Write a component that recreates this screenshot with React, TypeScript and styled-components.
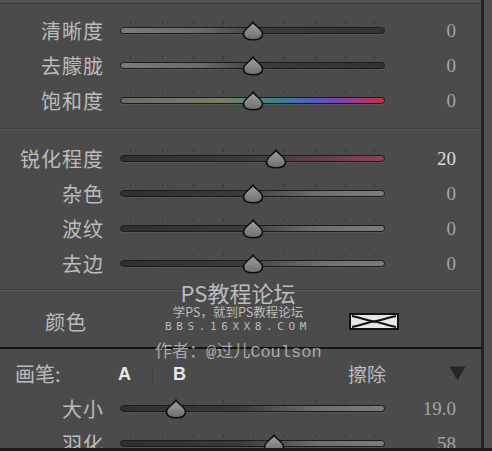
import React from 'react';
import styled, { createGlobalStyle } from 'styled-components';

const GlobalStyle = createGlobalStyle`
  html, body {
    margin: 0;
    padding: 0;
    background: #4b4b4b;
    overflow: hidden;
  }
`;

const CJK = `"Noto Sans CJK SC", "Noto Sans", sans-serif`;

type SliderRow = {
  label: string;
  value: string;
  pos: number;
  track: string;
  bright?: boolean;
};

const plain = 'linear-gradient(90deg, #7a7a7a 0%, #6a6a6a 30%, #3a3a3a 55%, #333 100%)';
const rising = 'linear-gradient(90deg, #2f2f2f 0%, #3a3a3a 45%, #6e6e6e 75%, #7c7c7c 100%)';
const saturation =
  'linear-gradient(90deg, #6c6c66 0%, #7c7d63 38%, #4b8a6a 50%, #3e7b98 62%, #5a54c2 75%, #8a3f9e 86%, #c0323f 100%)';
const sharpen = 'linear-gradient(90deg, #2f2f2f 0%, #3a3a3a 45%, #5b3f45 72%, #8c4251 100%)';

const presence: SliderRow[] = [
  { label: '清晰度', value: '0', pos: 50, track: plain },
  { label: '去朦胧', value: '0', pos: 50, track: plain },
  { label: '饱和度', value: '0', pos: 50, track: saturation },
];

const detail: SliderRow[] = [
  { label: '锐化程度', value: '20', pos: 59, track: sharpen, bright: true },
  { label: '杂色', value: '0', pos: 50, track: rising },
  { label: '波纹', value: '0', pos: 50, track: rising },
  { label: '去边', value: '0', pos: 50, track: rising },
];

const brush: SliderRow[] = [
  { label: '大小', value: '19.0', pos: 21, track: rising },
  { label: '羽化', value: '58', pos: 58, track: rising },
];

const ticks = [10, 42, 73, 103, 133, 163, 195, 225, 254];

const Thumb = () => (
  <svg width="22" height="20" viewBox="0 0 22 20">
    <defs>
      <linearGradient id="thumbFill" x1="0" y1="0" x2="0" y2="1">
        <stop offset="0" stopColor="#a4a4a4" />
        <stop offset="1" stopColor="#6c6c6c" />
      </linearGradient>
    </defs>
    <path
      d="M11 1.2 C13 5 20.5 8 20.5 13 C20.5 16.8 16.5 18.8 11 18.8 C5.5 18.8 1.5 16.8 1.5 13 C1.5 8 9 5 11 1.2 Z"
      fill="url(#thumbFill)"
      stroke="#0e0e0e"
      strokeWidth="1.6"
    />
  </svg>
);

const Slider = ({ row }: { row: SliderRow }) => (
  <Row>
    <Label>{row.label}</Label>
    <TrackBox>
      {ticks.map((t) => (
        <Tick key={t} style={{ left: t }} />
      ))}
      <Track $bg={row.track} />
      <ThumbHolder style={{ left: `${row.pos}%` }}>
        <Thumb />
      </ThumbHolder>
    </TrackBox>
    <Value $bright={row.bright}>{row.value}</Value>
  </Row>
);

const App = () => (
  <>
    <GlobalStyle />
    <Frame>
      <Panel>
        <TopStrip />
        <Section $top={9} $bottom={10}>
          {presence.map((r) => (
            <Slider key={r.label} row={r} />
          ))}
        </Section>
        <Divider />
        <Section $top={11} $bottom={8}>
          {detail.map((r) => (
            <Slider key={r.label} row={r} />
          ))}
        </Section>
        <Divider />
        <ColorRow>
          <ColorLabel>颜色</ColorLabel>
          <Swatch>
            <svg width="46" height="13" viewBox="0 0 46 13">
              <path d="M1 1 C14 4 18 6 23 6.5 C28 7 32 9 45 12" stroke="#111" strokeWidth="2" fill="none" />
              <path d="M1 12 C14 9 18 7 23 6.5 C28 6 32 4 45 1" stroke="#111" strokeWidth="2" fill="none" />
            </svg>
          </Swatch>
        </ColorRow>
        <BlackLine />
        <Section $top={7} $bottom={0}>
          <BrushRow>
            <BrushLabel>画笔:</BrushLabel>
            <BrushKey>A</BrushKey>
            <KeySep />
            <BrushKey>B</BrushKey>
            <Erase>擦除</Erase>
            <svg width="17" height="15" viewBox="0 0 17 15">
              <path d="M0.5 0.5 H16.5 L8.5 14.5 Z" fill="#262626" />
            </svg>
          </BrushRow>
          {brush.map((r) => (
            <Slider key={r.label} row={r} />
          ))}
        </Section>
      </Panel>
      <Edge />
      <Watermark>
        <WmTitle>PS教程论坛</WmTitle>
        <WmSub>学PS，就到PS教程论坛</WmSub>
        <WmSite>BBS.16XX8.COM</WmSite>
        <WmAuthor>作者：@过儿Coulson</WmAuthor>
      </Watermark>
      <BottomLine />
    </Frame>
  </>
);

const Frame = styled.div`
  position: relative;
  display: flex;
  align-items: flex-start;
  width: 492px;
  height: 451px;
  overflow: hidden;
  background: #4b4b4b;
`;

const Panel = styled.div`
  display: block;
  width: 481px;
  flex-shrink: 0;
`;

const Edge = styled.div`
  align-self: stretch;
  width: 11px;
  border-left: 3px solid #242424;
  background: #515151;
`;

const TopStrip = styled.div`
  height: 3px;
  background: #525252;
  border-bottom: 1px solid #3b3b3b;
`;

const Section = styled.div<{ $top: number; $bottom: number }>`
  display: flex;
  flex-direction: column;
  padding: ${(p) => p.$top}px 0 ${(p) => p.$bottom}px;
`;

const Divider = styled.div`
  height: 1px;
  background: #3e3e3e;
  border-bottom: 1px solid #565656;
`;

const BlackLine = styled.div`
  height: 2px;
  background: #141414;
`;

const Row = styled.div`
  display: grid;
  grid-template-columns: 104px 265px 55px;
  column-gap: 16px;
  align-items: center;
  height: 35px;
  flex-shrink: 0;
`;

const Label = styled.div`
  text-align: right;
  font-family: ${CJK};
  font-size: 20px;
  letter-spacing: 1px;
  color: #bcbcbc;
  line-height: 1;
`;

const TrackBox = styled.div`
  position: relative;
  height: 35px;
`;

const Tick = styled.div`
  position: absolute;
  top: 8px;
  width: 1px;
  height: 3px;
  background: #383838;
`;

const Track = styled.div<{ $bg: string }>`
  position: absolute;
  left: 0;
  right: 0;
  top: 14px;
  height: 5px;
  border: 1px solid #1c1c1c;
  border-radius: 4px;
  background: ${(p) => p.$bg};
  box-shadow: 0 1px 0 rgba(255, 255, 255, 0.06);
`;

const ThumbHolder = styled.div`
  position: absolute;
  top: 8px;
  width: 22px;
  height: 20px;
  transform: translateX(-11px);
  line-height: 0;
`;

const Value = styled.div<{ $bright?: boolean }>`
  text-align: right;
  font-family: 'Liberation Serif', serif;
  font-size: 19px;
  color: ${(p) => (p.$bright ? '#dcdcdc' : '#a4a4a4')};
  line-height: 1;
`;

const ColorRow = styled.div`
  display: flex;
  align-items: center;
  height: 35px;
  padding: 13px 0 8px 45px;
`;

const ColorLabel = styled.div`
  width: 304px;
  font-family: ${CJK};
  font-size: 20px;
  letter-spacing: 1px;
  color: #bcbcbc;
  line-height: 1;
`;

const Swatch = styled.div`
  width: 46px;
  height: 13px;
  border: 2px solid #111;
  background: #e6e6e6;
  line-height: 0;
`;

const BrushRow = styled.div`
  display: flex;
  align-items: center;
  height: 35px;
  flex-shrink: 0;
  padding-left: 15px;
`;

const BrushLabel = styled.div`
  width: 103px;
  font-family: ${CJK};
  font-size: 20px;
  color: #bcbcbc;
  line-height: 1;
`;

const BrushKey = styled.div`
  width: 14px;
  font-family: 'Liberation Sans', sans-serif;
  font-weight: bold;
  font-size: 18px;
  color: #e8e8e8;
  line-height: 1;
`;

const KeySep = styled.div`
  width: 1px;
  height: 16px;
  margin: 0 20px;
  background: #404040;
`;

const Erase = styled.div`
  margin-left: 161px;
  width: 101px;
  font-family: ${CJK};
  font-size: 19px;
  color: #bcbcbc;
  line-height: 1;
`;

const Watermark = styled.div`
  position: absolute;
  left: 150px;
  top: 280px;
  width: 176px;
  display: flex;
  flex-direction: column;
  align-items: center;
  color: rgba(222, 222, 222, 0.78);
  z-index: 2;
`;

const WmTitle = styled.div`
  font-family: ${CJK};
  font-size: 22px;
  line-height: 24px;
`;

const WmSub = styled.div`
  font-family: ${CJK};
  font-size: 12.5px;
  line-height: 15px;
`;

const WmSite = styled.div`
  margin-top: 1px;
  font-family: 'DejaVu Sans Mono', monospace;
  font-size: 11px;
  letter-spacing: 4.6px;
  line-height: 14px;
`;

const WmAuthor = styled.div`
  align-self: flex-start;
  margin: 9px 0 0 5px;
  font-family: 'Liberation Mono', ${CJK};
  font-size: 17px;
  line-height: 19px;
  white-space: nowrap;
  color: rgba(205, 205, 205, 0.75);
`;

const BottomLine = styled.div`
  position: absolute;
  left: 0;
  right: 0;
  bottom: 0;
  height: 3px;
  background: #1a1a1a;
`;

export default App;
